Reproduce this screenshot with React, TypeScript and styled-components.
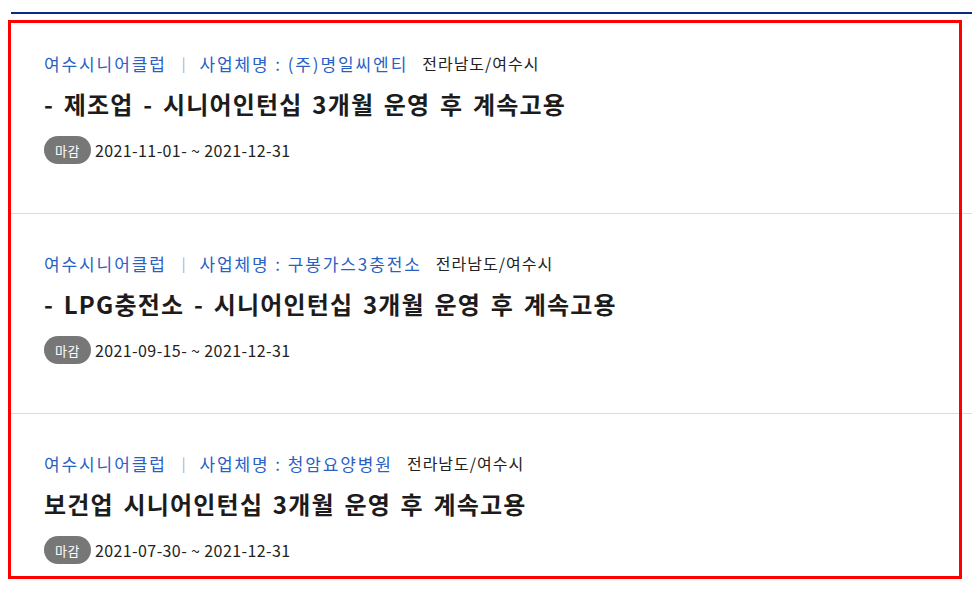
import React from "react";
import styled, { createGlobalStyle } from "styled-components";

const GlobalStyle = createGlobalStyle`
  html, body {
    margin: 0;
    padding: 0;
    background: #fff;
    overflow: hidden;
  }
  body {
    font-family: "Noto Sans CJK KR", "Noto Sans", sans-serif;
    color: #222;
  }
`;

const Page = styled.div`
  position: relative;
  width: 972px;
  height: 590px;
  padding: 12px 0 0 11px;
  box-sizing: border-box;
`;

const List = styled.ul`
  list-style: none;
  margin: 0;
  padding: 0;
  border-top: 2px solid #0b2a85;
`;

const Item = styled.li`
  display: flex;
  flex-direction: column;
  padding: 36px 0 0 33px;
  height: 200px;
  box-sizing: border-box;
  border-bottom: 1px solid #dcdcdc;
  &:last-child {
    border-bottom: none;
  }
`;

const Meta = styled.div`
  display: flex;
  align-items: center;
  height: 26px;
  font-size: 17px;
  letter-spacing: 1.9px;
  color: #2a5fc4;
  white-space: nowrap;
`;

const Divider = styled.span`
  margin: 0 12px 0 15px;
  color: #a9a3d6;
  font-size: 14px;
`;

const Region = styled.span`
  margin-left: 14px;
  font-size: 16px;
  letter-spacing: 1px;
  color: #222;
`;

const Title = styled.h3`
  margin: 11px 0 0;
  height: 34px;
  line-height: 34px;
  font-size: 24px;
  font-weight: 700;
  letter-spacing: 1.2px;
  word-spacing: 3px;
  color: #1c1c1c;
  white-space: nowrap;
`;

const DateRow = styled.div`
  display: flex;
  align-items: center;
  gap: 4px;
  margin-top: 15px;
  font-size: 16px;
  letter-spacing: 0.4px;
  color: #222;
`;

const Badge = styled.span`
  display: inline-flex;
  align-items: center;
  justify-content: center;
  width: 47px;
  height: 28px;
  border-radius: 14px;
  background: #777;
  color: #fff;
  font-size: 13px;
  letter-spacing: 0.5px;
`;

const Highlight = styled.div`
  position: absolute;
  left: 8px;
  top: 20px;
  width: 954px;
  height: 559px;
  box-sizing: border-box;
  border: 3px solid #ff0000;
  pointer-events: none;
`;

const jobs = [
  {
    org: "여수시니어클럽",
    company: "사업체명 : (주)명일씨엔티",
    region: "전라남도/여수시",
    title: "- 제조업 - 시니어인턴십 3개월 운영 후 계속고용",
    period: "2021-11-01- ~ 2021-12-31",
  },
  {
    org: "여수시니어클럽",
    company: "사업체명 : 구봉가스3충전소",
    region: "전라남도/여수시",
    title: "- LPG충전소 - 시니어인턴십 3개월 운영 후 계속고용",
    period: "2021-09-15- ~ 2021-12-31",
  },
  {
    org: "여수시니어클럽",
    company: "사업체명 : 청암요양병원",
    region: "전라남도/여수시",
    title: "보건업 시니어인턴십 3개월 운영 후 계속고용",
    period: "2021-07-30- ~ 2021-12-31",
  },
];

export default function App() {
  return (
    <Page>
      <GlobalStyle />
      <List>
        {jobs.map((job, i) => (
          <Item key={i}>
            <Meta>
              <span>{job.org}</span>
              <Divider>|</Divider>
              <span>{job.company}</span>
              <Region>{job.region}</Region>
            </Meta>
            <Title>{job.title}</Title>
            <DateRow>
              <Badge>마감</Badge>
              <span>{job.period}</span>
            </DateRow>
          </Item>
        ))}
      </List>
      <Highlight />
    </Page>
  );
}
